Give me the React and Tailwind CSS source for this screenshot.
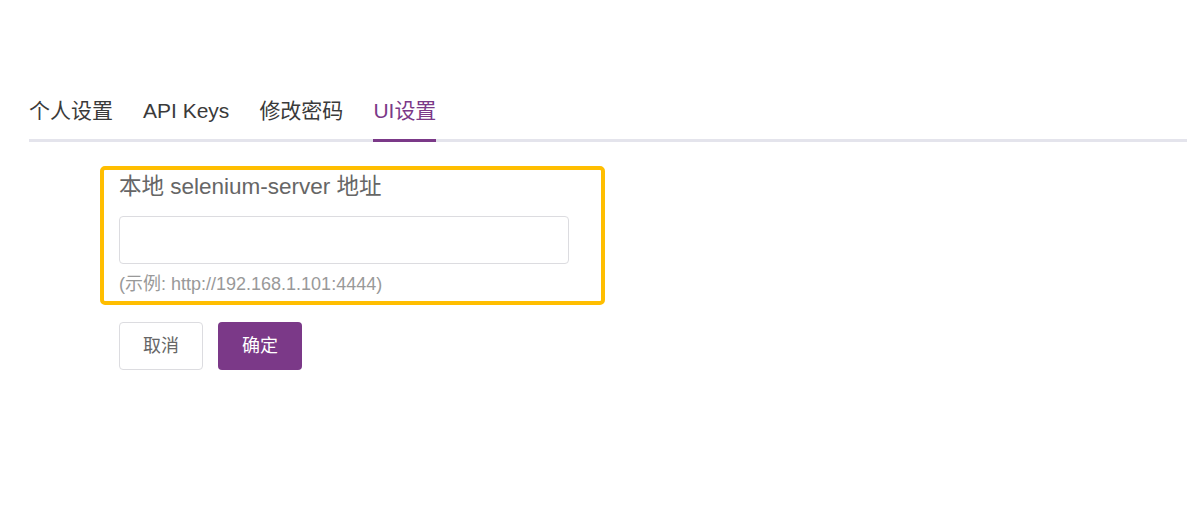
export default function App() {
  const font = { fontFamily: '"Liberation Sans", Arial, "Noto Sans CJK SC", sans-serif' };
  const tabs = ["个人设置", "API Keys", "修改密码", "UI设置"];
  return (
    <div className="min-h-[517px] w-[1187px] bg-white pl-[29px] pt-[96px]" style={font}>
      <div className="flex border-b-[3px] border-[#e4e4ec]">
        {tabs.map((t, i) => (
          <div
            key={t}
            className={
              i === 3
                ? "mr-[30px] -mb-[3px] border-b-[3px] border-[#7b3988] pb-[13px] text-[21px] leading-[30px] text-[#7b3988]"
                : "mr-[30px] -mb-[3px] border-b-[3px] border-transparent pb-[13px] text-[21px] leading-[30px] text-[#3a3a3a]"
            }
          >
            {t}
          </div>
        ))}
      </div>
      <div className="ml-[71px] mt-[24px] w-[505px] rounded-[5px] border-[4px] border-[#ffbe00] pl-[15px] pt-[4px] pb-[6px]">
        <div className="text-[22.5px] leading-[26px] text-[#666]">本地 selenium-server 地址</div>
        <input className="mt-[16px] block h-[48px] w-[450px] rounded-[4px] border border-[#dcdce0] bg-white px-3 text-[18px] outline-none" />
        <div className="mt-[9px] text-[18px] leading-[22px] text-[#999]">(示例: http://192.168.1.101:4444)</div>
      </div>
      <div className="ml-[90px] mt-[17px] flex gap-[15px]">
        <button className="h-[48px] w-[84px] rounded-[4px] border border-[#dcdce0] bg-white text-[18px] text-[#666]">取消</button>
        <button className="h-[48px] w-[84px] rounded-[4px] bg-[#7b3988] text-[18px] text-white">确定</button>
      </div>
    </div>
  );
}
